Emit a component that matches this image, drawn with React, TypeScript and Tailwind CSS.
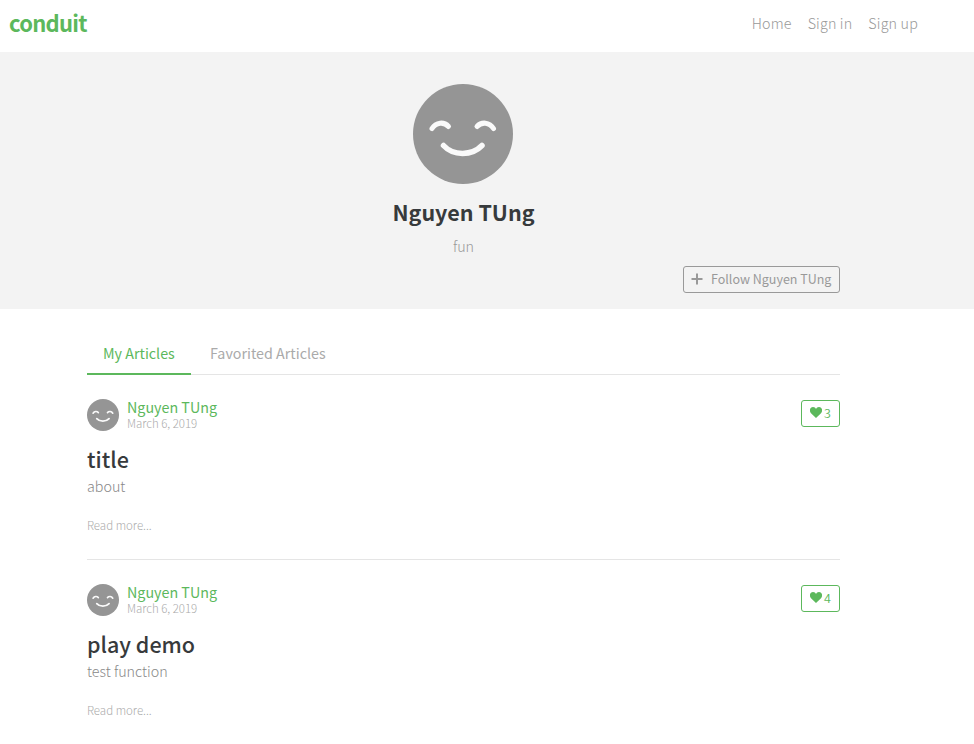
import React from "react";

function Avatar({ className }: { className: string }) {
  return (
    <svg viewBox="0 0 100 100" className={className} fill="none" stroke="#fafafa" strokeLinecap="round">
      <circle cx="50" cy="50" r="50" fill="#959595" stroke="none" />
      <path d="M19 44.500C23 38 31 37.500 35.500 42.500" strokeWidth="5" />
      <path d="M64 42.500C68.500 37.500 76.500 38 80.500 44.500" strokeWidth="5" />
      <path d="M30.500 61.500C40 72 59 72 69 61.500" strokeWidth="5.500" />
    </svg>
  );
}

interface ArticleProps {
  title: string;
  about: string;
  likes: number;
}

function Article({ title, about, likes }: ArticleProps) {
  return (
    <article className="h-[185px] border-t border-[#e5e5e5] pt-6">
      <div className="flex h-8 items-start">
        <Avatar className="size-8" />
        <div className="ml-2 flex-1">
          <a className="block h-4 text-[14.3px] leading-4 text-[#5cb85c]">Nguyen TUng</a>
          <span className="block h-4 text-[11.5px] font-light leading-[17px] tracking-[-0.03px] text-[#aaa]">March 6, 2019</span>
        </div>
        <button className="mt-px flex h-[27px] w-[39px] items-center rounded-[3px] border border-[#5cb85c] pl-2 pb-px text-[12.5px] font-[350] leading-5 text-[#5cb85c]">
          <svg viewBox="0 0 12 11" className="mr-[2px] mb-[2px] h-[11px] w-3 shrink-0" fill="currentColor">
            <path d="M6 11 1 6.300C-1 4.200-.2 0 3 0c1.500 0 2.500.9 3 1.900C6.500.9 7.500 0 9 0c3.200 0 4 4.200 2 6.300Z" />
          </svg>
          <span>{likes}</span>
        </button>
      </div>
      <h1 className="mt-[15px] h-[27px] text-[21.5px] font-medium leading-[26px] text-[#373a3c]">{title}</h1>
      <p className="h-6 text-[14.3px] font-light leading-[26px] text-[#888]">{about}</p>
      <span className="mt-[18px] block text-[11.5px] font-light leading-5 text-[#aaa]">Read more...</span>
    </article>
  );
}

export default function App() {
  return (
    <div className="h-[744px] w-full overflow-hidden bg-white font-['Noto_Sans_CJK_SC',sans-serif] text-[14.3px]">
      <nav className="flex h-[52px] justify-between pl-[9px] pr-14">
        <a className="mt-[8px] text-[22px] font-bold leading-7 tracking-[-0.75px] text-[#5cb85c]">conduit</a>
        <div className="mt-[11px] flex gap-4 font-light leading-6 tracking-[0.17px] text-[#999]">
          <a>Home</a>
          <a>Sign in</a>
          <a>Sign up</a>
        </div>
      </nav>
      <header className="h-[257px] bg-[#f3f3f3] pl-[87px] pt-8">
        <div className="flex w-[753px] flex-col items-center">
          <Avatar className="mr-px size-[100px]" />
          <h4 className="mt-[15px] h-[27px] text-[21.5px] font-bold leading-[26px] text-[#373a3c]">Nguyen TUng</h4>
          <p className="mt-2 h-6 font-light leading-6 text-[#999]">fun</p>
          <button className="mt-2 flex h-[27px] w-[157px] items-center self-end rounded-[3px] border border-[#999] pl-[7px] text-[12.5px] font-normal text-[#999]">
            <svg viewBox="0 0 12 12" className="mr-2 mb-px size-3 shrink-0" stroke="currentColor" strokeWidth="2">
              <path d="M6 .5v11M.5 6h11" />
            </svg>
            <span className="whitespace-nowrap">Follow Nguyen TUng</span>
          </button>
        </div>
      </header>
      <main className="ml-[87px] w-[753px] pt-6">
        <div className="flex h-[41px] leading-[39px]">
          <a className="relative h-[42px] w-[104px] border-b-2 border-[#5cb85c] pl-4 text-[#5cb85c]">My Articles</a>
          <a className="pl-[19px] text-[#aaa]">Favorited Articles</a>
        </div>
        <Article title="title" about="about" likes={3} />
        <Article title="play demo" about="test function" likes={4} />
      </main>
    </div>
  );
}
